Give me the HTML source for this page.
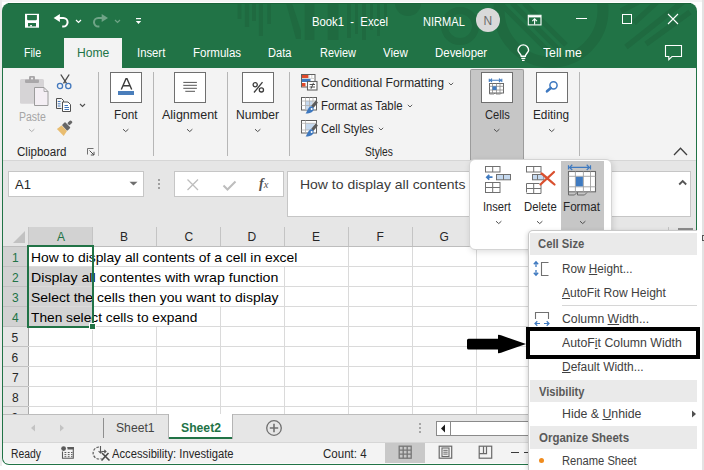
<!DOCTYPE html>
<html><head><meta charset="utf-8"><style>
html,body{margin:0;padding:0}
html{width:704px;height:470px;overflow:hidden}
body{width:704px;height:470px;position:relative;overflow:hidden;background:#fff;font-family:"Liberation Sans",sans-serif}
.t{position:absolute;white-space:nowrap;transform-origin:0 0;font-family:"Liberation Sans",sans-serif}
.a{position:absolute}
svg{position:absolute;overflow:visible}

</style></head><body>
<!-- outer -->
<div class="a" style="left:0;top:0;width:704px;height:2px;background:#f4f4f4"></div>
<div class="a" style="left:0;top:0;width:2px;height:466px;background:#ececec"></div>
<div class="a" style="left:702px;top:0;width:2px;height:470px;background:#e3e3e3"></div>
<!-- window frame -->
<div class="a" style="left:2px;top:3px;width:695px;height:462px;background:#217346;border-radius:8px 8px 7px 7px;overflow:hidden">
 <svg width="695" height="66" style="left:0;top:0">
  <g fill="#1f6a40">
   <rect x="235.6" y="0" width="3.8" height="16.0"/>
   <rect x="242.8" y="0" width="4.4" height="24.0"/>
   <rect x="250.0" y="0" width="4.0" height="18.0"/>
   <rect x="256.8" y="0" width="4.2" height="33.0"/>
   <rect x="265.3" y="0" width="3.7" height="21.0"/>
   <rect x="302.7" y="0" width="9.7" height="37.0"/>
   <rect x="325.7" y="0" width="10.8" height="37.0"/>
   <rect x="345.0" y="0" width="4.0" height="35.0"/>
   <rect x="353.0" y="0" width="3.0" height="31.0"/>
   <rect x="360.0" y="0" width="4.0" height="37.0"/>
   <rect x="368.0" y="0" width="3.0" height="27.0"/>
   <rect x="375.0" y="0" width="3.0" height="33.0"/>
   <rect x="382.0" y="0" width="3.0" height="17.0"/>
   <path d="M284 0 L290 0 L299 28 L299 36 L294 36 Z"/>
   <circle cx="406" cy="0" r="13"/>
  </g>
  <g fill="none" stroke="#1f6a40">
   <circle cx="458" cy="23" r="15.5" stroke-width="7"/>
   <circle cx="549" cy="7" r="52" stroke-width="11"/>
   <path d="M498 0 L548 50 M510 0 L556 46 M522 0 L564 42" stroke-width="5"/>
   <path d="M688 9 L644 41 M682 -2 L624 44 M656 -2 L632 20 M638 -2 L619 8" stroke-width="5.5"/>
  </g>
 </svg>
</div>
<!-- top dark edge -->
<div class="a" style="left:8px;top:3px;width:683px;height:1px;background:#1a6338"></div>

<!-- QAT icons -->
<svg width="16" height="16" style="left:24px;top:13px">
 <rect x="1" y="0.8" width="14" height="13.9" fill="#fff"/>
 <path d="M3.1 2.1 L12.9 2.1 L12.9 6.4 L12.1 7.2 L3.9 7.2 L3.1 6.4 Z" fill="#217346"/>
 <rect x="4" y="10" width="8" height="3.4" fill="#217346"/>
 <rect x="6.1" y="12.1" width="1.9" height="1.3" fill="#fff"/>
</svg>
<svg width="18" height="16" style="left:53px;top:13px">
 <path d="M0.6 5 L6.9 1 L6.9 9 Z" fill="#fff"/>
 <path d="M5 5 L10.3 5 A4.3 4.3 0 0 1 10.3 13.6 L9.2 13.6" fill="none" stroke="#fff" stroke-width="2"/>
</svg>
<svg width="8" height="5" style="left:75px;top:18.5px"><path d="M1 1 L3.5 3.5 L6 1" fill="none" stroke="#fff" stroke-width="1.2"/></svg>
<svg width="18" height="16" style="left:92.5px;top:13px" opacity="0.35">
 <g transform="translate(15.6,0) scale(-1,1)">
 <path d="M0.6 5 L6.9 1 L6.9 9 Z" fill="#fff"/>
 <path d="M5 5 L10.3 5 A4.3 4.3 0 0 1 10.3 13.6 L9.2 13.6" fill="none" stroke="#fff" stroke-width="2"/>
 </g>
</svg>
<svg width="8" height="5" style="left:114px;top:18.5px" opacity="0.35"><path d="M1 1 L3.5 3.5 L6 1" fill="none" stroke="#fff" stroke-width="1.2"/></svg>
<svg width="8" height="8" style="left:135px;top:17px">
 <rect x="1" y="1" width="5" height="1.2" fill="#fff"/>
 <path d="M0.8 4 L6.2 4 L3.5 7 Z" fill="#fff"/>
</svg>

<!-- avatar -->
<div class="a" style="left:476px;top:8px;width:24px;height:24px;border-radius:50%;background:#d9d9d9"></div>
<!-- window controls -->
<svg width="16" height="12" style="left:527px;top:13.5px">
 <rect x="1.3" y="1.3" width="12.7" height="9.6" fill="none" stroke="#fff" stroke-width="1.1"/>
 <path d="M1.3 2.6 L14 2.6" stroke="#fff" stroke-width="1.6"/>
 <path d="M7.6 10.5 L7.6 5 M5.3 7.2 L7.6 4.9 L9.9 7.2" fill="none" stroke="#fff" stroke-width="1.1"/>
</svg>
<div class="a" style="left:575.5px;top:18px;width:11px;height:1px;background:#fff"></div>
<div class="a" style="left:622px;top:14px;width:10px;height:10px;border:1px solid #fff;box-sizing:border-box"></div>
<svg width="12" height="12" style="left:667px;top:13px"><path d="M1 1 L11 11 M11 1 L1 11" stroke="#fff" stroke-width="1.1"/></svg>
<!-- tell me bulb -->
<svg width="14" height="18" style="left:517px;top:44.5px">
 <path d="M4.3 11.3 C4.3 9 1 7.5 1 5.2 A5.3 5.3 0 0 1 11.6 5.2 C11.6 7.5 8.3 9 8.3 11.3 Z" fill="none" stroke="#fff" stroke-width="1.4"/>
 <path d="M4.3 13.3 L8.3 13.3 M5 15.3 L7.6 15.3" stroke="#fff" stroke-width="1.3"/>
</svg>
<!-- comment icon -->
<svg width="20" height="18" style="left:663.5px;top:43.5px">
 <path d="M1.5 1.5 L17.5 1.5 L17.5 12.5 L8 12.5 L4.8 15.6 L4.8 12.5 L1.5 12.5 Z" fill="none" stroke="#fff" stroke-width="1.1"/>
</svg>
<!-- home tab -->
<div class="a" style="left:64px;top:38px;width:58px;height:30px;background:#f3f3f3"></div>
<!-- ribbon -->
<div class="a" style="left:3px;top:68px;width:693px;height:92px;background:#f3f3f3"></div>
<div class="a" style="left:3px;top:160px;width:693px;height:1px;background:#d6d6d6"></div>
<div class="a" style="left:3px;top:161px;width:693px;height:66px;background:#e6e6e6"></div>
<!-- grid area -->
<div class="a" style="left:3px;top:227px;width:693px;height:187px;background:#fff"></div>
<!-- tab bar -->
<div class="a" style="left:3px;top:414px;width:693px;height:28px;background:#e6e6e6;border-top:1px solid #c8c8c8;box-sizing:border-box"></div>
<!-- status bar -->

<!-- ===== RIBBON ===== -->
<!-- Paste -->
<svg width="30" height="32" style="left:19px;top:75px">
 <rect x="1" y="4" width="24" height="24.7" rx="1.5" fill="#d6d4d6"/>
 <rect x="6" y="4.4" width="14" height="3.5" rx="0.8" fill="#a9a7a9"/>
 <rect x="10" y="1" width="6" height="5" rx="1.2" fill="#a9a7a9"/>
 <circle cx="13" cy="3.5" r="1" fill="#f3f3f3"/>
 <path d="M15.5 12.5 L25 12.5 L29 16.5 L29 30.5 L15.5 30.5 Z" fill="#f4eff4" stroke="#9c9c9c" stroke-width="1"/>
 <path d="M25 12.5 L25 16.5 L29 16.5" fill="none" stroke="#9c9c9c" stroke-width="0.8"/>
</svg>
<svg width="8" height="5" style="left:28.0px;top:128.0px"><path d="M1 1.2 L3.7 3.6 L6.4 1.2" fill="none" stroke="#b0b0b0" stroke-width="1"/></svg>
<!-- cut -->
<svg width="18" height="16" style="left:56px;top:73px">
 <path d="M4.8 1.5 L10.5 10.3 M13.2 1.5 L7.5 10.3" stroke="#4a4a4a" stroke-width="1.35"/>
 <circle cx="4" cy="13" r="2.6" fill="none" stroke="#4378bd" stroke-width="1.3"/>
 <circle cx="12.3" cy="13" r="2.6" fill="none" stroke="#4378bd" stroke-width="1.3"/>
</svg>
<!-- copy -->
<svg width="18" height="16" style="left:55px;top:97px">
 <path d="M1.5 1.5 L6.5 1.5 L8.5 3.5 L8.5 5 M1.5 1.5 L1.5 11.5 L6.5 11.5" fill="none" stroke="#505050" stroke-width="1"/>
 <path d="M2.8 4.5 L5.5 4.5 M2.8 6.8 L5.5 6.8 M2.8 9 L5.5 9" stroke="#4378bd" stroke-width="1"/>
 <path d="M7.5 5 L13 5 L15.5 7.5 L15.5 14.5 L7.5 14.5 Z" fill="#fff" stroke="#505050" stroke-width="1"/>
 <path d="M9.5 8.5 L13 8.5 M9.5 10.5 L14 10.5 M9.5 12.5 L14 12.5" stroke="#4378bd" stroke-width="1"/>
</svg>
<svg width="8" height="5" style="left:79px;top:103px"><path d="M1 1 L3.5 3.5 L6 1" fill="none" stroke="#505050" stroke-width="1.1"/></svg>
<!-- format painter -->
<svg width="22" height="22" style="left:52px;top:116px">
 <g transform="translate(14,10.6) rotate(-44)">
  <path d="M-2.4 -3.9 L-2.4 3.9 L-8.2 5.2 L-8.2 -4.6 Z" fill="#e9bd70"/>
  <rect x="-2" y="-3.9" width="4.6" height="7.8" rx="0.9" fill="#676767"/>
  <rect x="3.2" y="-1.6" width="4.6" height="3.2" rx="1" fill="#676767"/>
 </g>
</svg>
<!-- dialog launcher -->
<svg width="10" height="10" style="left:86px;top:147px">
 <path d="M1.5 7.5 L1.5 1.5 L7.5 1.5" fill="none" stroke="#707070" stroke-width="1"/>
 <path d="M3.5 3.5 L8 8 M8 4.8 L8 8 L4.8 8" fill="none" stroke="#505050" stroke-width="1"/>
</svg>
<!-- separators -->
<div class="a" style="left:98px;top:72px;width:1px;height:84px;background:#b6b6b6"></div>
<div class="a" style="left:153px;top:72px;width:1px;height:84px;background:#b6b6b6"></div>
<div class="a" style="left:227px;top:72px;width:1px;height:84px;background:#b6b6b6"></div>
<div class="a" style="left:289px;top:72px;width:1px;height:84px;background:#b6b6b6"></div>
<div class="a" style="left:579px;top:72px;width:1px;height:84px;background:#b6b6b6"></div>
<!-- Font -->
<div class="a" style="left:110px;top:72px;width:32px;height:31px;background:#fff;border:1px solid #6f6f6f;box-sizing:border-box"></div>
<svg width="14" height="12" style="left:120px;top:78px"><path d="M1.3 11.5 L6 0.8 L7 0.8 L11.7 11.5 M3.2 7.8 L9.8 7.8" fill="none" stroke="#3c3c3c" stroke-width="1.4"/></svg>
<div class="a" style="left:118px;top:91px;width:16px;height:4px;background:#4a7ebb"></div>
<svg width="8" height="5" style="left:122.0px;top:127.5px"><path d="M1 1.2 L3.7 3.6 L6.4 1.2" fill="none" stroke="#505050" stroke-width="1"/></svg>
<!-- Alignment -->
<div class="a" style="left:174px;top:72px;width:32px;height:31px;background:#fff;border:1px solid #6f6f6f;box-sizing:border-box"></div>
<svg width="16" height="12" style="left:182px;top:80px"><path d="M1.3 2.4 L14.9 2.4 M1.3 5.3 L14.9 5.3 M1.3 8.3 L14.9 8.3 M3.3 11.3 L13 11.3" stroke="#555" stroke-width="1"/></svg>
<svg width="8" height="5" style="left:186.0px;top:127.5px"><path d="M1 1.2 L3.7 3.6 L6.4 1.2" fill="none" stroke="#505050" stroke-width="1"/></svg>
<!-- Number -->
<div class="a" style="left:242px;top:72px;width:32px;height:31px;background:#fff;border:1px solid #6f6f6f;box-sizing:border-box"></div>
<svg width="14" height="13" style="left:252px;top:81px">
 <circle cx="3.2" cy="3.7" r="2.1" fill="none" stroke="#3c3c3c" stroke-width="1.3"/>
 <circle cx="9.4" cy="8.9" r="2.1" fill="none" stroke="#3c3c3c" stroke-width="1.3"/>
 <path d="M10.5 1.2 L2 11.5" stroke="#3c3c3c" stroke-width="1.3"/>
</svg>
<svg width="8" height="5" style="left:254.0px;top:127.5px"><path d="M1 1.2 L3.7 3.6 L6.4 1.2" fill="none" stroke="#505050" stroke-width="1"/></svg>
<!-- Styles icons -->
<svg width="20" height="18" style="left:300px;top:73px">
 <rect x="1.5" y="1.5" width="13.5" height="12.5" fill="#fff" stroke="#606060" stroke-width="1"/>
 <rect x="2" y="2" width="6.5" height="3" fill="#e04a2a"/>
 <path d="M9 2 L9 5 M11.8 2 L11.8 5 M2 5.5 L14.5 5.5" stroke="#c8c8c8" stroke-width="0.8"/>
 <rect x="2" y="6" width="8.5" height="3" fill="#3f7ac0"/>
 <rect x="2" y="10" width="3.5" height="3.5" fill="#e04a2a"/>
 <rect x="7.5" y="8.5" width="9.5" height="8.5" fill="#fff" stroke="#606060" stroke-width="1.1"/>
 <path d="M9.6 11.5 L15 11.5 M9.6 14 L15 14 M13.5 9.8 L11 15.8" stroke="#404040" stroke-width="0.9"/>
</svg>
<svg width="20" height="18" style="left:300px;top:96px">
 <rect x="1.5" y="1.5" width="15" height="12.5" fill="#fff" stroke="#606060" stroke-width="1"/>
 <rect x="5.5" y="5" width="7" height="8.5" fill="#c5d9ef"/>
 <path d="M5.5 1.5 L5.5 14 M9.5 1.5 L9.5 14 M13 1.5 L13 10 M1.5 5 L16.5 5 M1.5 9.5 L14 9.5" stroke="#b0b0b0" stroke-width="0.8"/>
 <path d="M16.8 5.5 L12.3 11" stroke="#5c5c5c" stroke-width="3"/>
 <path d="M11 10.2 C13.5 10.5 14.5 13 13 15 C11.5 16.8 8.5 17.5 5.5 17.6 C7 16 8 11 11 10.2 Z" fill="#3e78be"/>
 <circle cx="11.6" cy="13" r="1" fill="#fff"/>
</svg>
<svg width="20" height="18" style="left:300px;top:119px">
 <rect x="1.5" y="1.5" width="15" height="12.5" fill="#fff" stroke="#606060" stroke-width="1"/>
 <rect x="5.5" y="4.5" width="9" height="6.5" fill="#c5d9ef"/>
 <path d="M5.5 1.5 L5.5 14 M1.5 4.3 L16.5 4.3 M1.5 11 L11 11" stroke="#b0b0b0" stroke-width="0.8"/>
 <path d="M16.8 5.5 L12.3 11" stroke="#5c5c5c" stroke-width="3"/>
 <path d="M11 10.2 C13.5 10.5 14.5 13 13 15 C11.5 16.8 8.5 17.5 5.5 17.6 C7 16 8 11 11 10.2 Z" fill="#3e78be"/>
 <circle cx="11.6" cy="13" r="1" fill="#fff"/>
</svg>
<svg width="6" height="4" style="left:448px;top:81.5px"><path d="M0.8 0.8 L3 3 L5.2 0.8" fill="none" stroke="#606060" stroke-width="1"/></svg>
<svg width="6" height="4" style="left:406.5px;top:103.5px"><path d="M0.8 0.8 L3 3 L5.2 0.8" fill="none" stroke="#606060" stroke-width="1"/></svg>
<svg width="6" height="4" style="left:377.5px;top:126.5px"><path d="M0.8 0.8 L3 3 L5.2 0.8" fill="none" stroke="#606060" stroke-width="1"/></svg>
<!-- Cells (pressed) -->
<div class="a" style="left:470px;top:69px;width:54px;height:91px;background:#c6c6c6;border:1px solid #9c9c9c;border-bottom:none;border-radius:2px 2px 0 0;box-sizing:border-box"></div>
<div class="a" style="left:481px;top:72px;width:32px;height:31px;background:#fff;border:1px solid #6f6f6f;box-sizing:border-box"></div>
<svg width="18" height="18" style="left:488px;top:77px">
 <path d="M1.3 1.8 L1.3 5 M13.8 1.8 L13.8 5 M2 3.3 L13 3.3 M4 1.6 L2.3 3.3 L4 5 M11 1.6 L12.8 3.3 L11 5" fill="none" stroke="#3f7ac0" stroke-width="1.1"/>
 <rect x="1.5" y="6.5" width="14" height="9.5" fill="#fff" stroke="#6a6a6a" stroke-width="1"/>
 <path d="M4.5 6.5 L4.5 16 M8.5 6.5 L8.5 16 M12 6.5 L12 16 M1.5 9.3 L15.5 9.3 M1.5 13 L15.5 13" stroke="#8a8a8a" stroke-width="0.8"/>
 <rect x="4.5" y="9.3" width="4" height="3.7" fill="#3f7ac0"/>
 <path d="M1.5 16 L1.5 17 L6 17 L7 16 M8 16 L8 17 L12.5 17 L13.5 16" fill="none" stroke="#6a6a6a" stroke-width="0.8"/>
</svg>
<svg width="8" height="5" style="left:493.0px;top:127.5px"><path d="M1 1.2 L3.7 3.6 L6.4 1.2" fill="none" stroke="#505050" stroke-width="1"/></svg>
<!-- Editing -->
<div class="a" style="left:536px;top:72px;width:32px;height:31px;background:#fff;border:1px solid #6f6f6f;box-sizing:border-box"></div>
<svg width="14" height="14" style="left:545px;top:79px">
 <circle cx="8.5" cy="6.3" r="3.6" fill="none" stroke="#3d78c0" stroke-width="1.5"/>
 <path d="M5.8 9 L2 12.3" stroke="#3d78c0" stroke-width="2.6" stroke-linecap="round"/>
</svg>
<svg width="8" height="5" style="left:548.0px;top:127.5px"><path d="M1 1.2 L3.7 3.6 L6.4 1.2" fill="none" stroke="#505050" stroke-width="1"/></svg>
<!-- collapse caret -->
<svg width="16" height="10" style="left:673px;top:147px"><path d="M1 8 L7.5 1.3 L14 8" fill="none" stroke="#404040" stroke-width="1.3"/></svg>
<!-- ===== FORMULA BAR ===== -->
<div class="a" style="left:8px;top:171px;width:136px;height:26px;background:#fff;border:1px solid #c6c6c6;box-sizing:border-box"></div>
<svg width="10" height="6" style="left:129px;top:180.5px"><path d="M0.5 0.8 L8.5 0.8 L4.5 4.5 Z" fill="#6e6e6e"/></svg>
<div class="a" style="left:158px;top:179px;width:2px;height:2px;background:#a0a0a0"></div>
<div class="a" style="left:158px;top:183px;width:2px;height:2px;background:#a0a0a0"></div>
<div class="a" style="left:158px;top:187px;width:2px;height:2px;background:#a0a0a0"></div>
<div class="a" style="left:174px;top:171px;width:110px;height:26px;background:#fff;border:1px solid #c6c6c6;box-sizing:border-box"></div>
<svg width="14" height="14" style="left:186px;top:178px"><path d="M1.5 1.5 L12 12 M12 1.5 L1.5 12" stroke="#bdbdbd" stroke-width="1.3"/></svg>
<svg width="16" height="12" style="left:222px;top:180px"><path d="M1.5 5.5 L5.5 9.5 L13.5 1.5" fill="none" stroke="#bdbdbd" stroke-width="2"/></svg>
<span class="a" style="left:259px;top:175.5px;font-family:'Liberation Serif',serif;font-style:italic;font-weight:bold;font-size:14px;line-height:16px;color:#505050;z-index:1">f<span style="font-size:10.5px;font-weight:normal">x</span></span>
<div class="a" style="left:287px;top:171px;width:404px;height:46px;background:#fff;border:1px solid #c6c6c6;box-sizing:border-box"></div>
<span class="a" style="left:468.5px;top:177.9px;font-size:13.5px;line-height:13.5px;color:#3a3a3a;white-space:nowrap;z-index:1;transform:scaleX(1.03);transform-origin:0 0">of a cell</span>
<svg width="10" height="7" style="left:678px;top:179px"><path d="M1.2 5.5 L4.7 2 L8.2 5.5" fill="none" stroke="#555" stroke-width="1.8"/></svg>

<!-- ===== GRID ===== -->
<div class="a" style="left:3px;top:227px;width:693px;height:19px;background:#e6e6e6"></div>
<div class="a" style="left:3px;top:246px;width:25px;height:168px;background:#e6e6e6"></div>
<svg width="14" height="14" style="left:12px;top:230px"><path d="M13 1 L13 13 L1 13 Z" fill="#c2c2c2"/></svg>
<div class="a" style="left:28px;top:227px;width:64px;height:19px;background:#d2d2d2"></div>
<div class="a" style="left:3px;top:247px;width:25px;height:79px;background:#d2d2d2"></div>
<div class="a" style="left:28px;top:227px;width:1px;height:19px;background:#c4c4c4"></div>
<div class="a" style="left:92px;top:227px;width:1px;height:19px;background:#c4c4c4"></div>
<div class="a" style="left:156px;top:227px;width:1px;height:19px;background:#c4c4c4"></div>
<div class="a" style="left:220px;top:227px;width:1px;height:19px;background:#c4c4c4"></div>
<div class="a" style="left:284px;top:227px;width:1px;height:19px;background:#c4c4c4"></div>
<div class="a" style="left:348px;top:227px;width:1px;height:19px;background:#c4c4c4"></div>
<div class="a" style="left:412px;top:227px;width:1px;height:19px;background:#c4c4c4"></div>
<div class="a" style="left:476px;top:227px;width:1px;height:19px;background:#c4c4c4"></div>
<div class="a" style="left:540px;top:227px;width:1px;height:19px;background:#c4c4c4"></div>
<div class="a" style="left:604px;top:227px;width:1px;height:19px;background:#c4c4c4"></div>
<div class="a" style="left:668px;top:227px;width:1px;height:19px;background:#c4c4c4"></div>
<div class="a" style="left:3px;top:246px;width:693px;height:1px;background:#bdbdbd"></div>
<div class="a" style="left:28px;top:246px;width:1px;height:168px;background:#a8a8a8"></div>
<div class="a" style="left:3px;top:266px;width:25px;height:1px;background:#c2c2c2"></div>
<div class="a" style="left:3px;top:286px;width:25px;height:1px;background:#c2c2c2"></div>
<div class="a" style="left:3px;top:306px;width:25px;height:1px;background:#c2c2c2"></div>
<div class="a" style="left:3px;top:326px;width:25px;height:1px;background:#c2c2c2"></div>
<div class="a" style="left:3px;top:346px;width:25px;height:1px;background:#c2c2c2"></div>
<div class="a" style="left:3px;top:366px;width:25px;height:1px;background:#c2c2c2"></div>
<div class="a" style="left:3px;top:386px;width:25px;height:1px;background:#c2c2c2"></div>
<div class="a" style="left:3px;top:406px;width:25px;height:1px;background:#c2c2c2"></div>
<div class="a" style="left:28px;top:267px;width:64px;height:59px;background:#d3d3d3"></div>
<div class="a" style="left:28px;top:266px;width:668px;height:1px;background:#dadada"></div>
<div class="a" style="left:28px;top:286px;width:668px;height:1px;background:#dadada"></div>
<div class="a" style="left:28px;top:306px;width:668px;height:1px;background:#dadada"></div>
<div class="a" style="left:28px;top:326px;width:668px;height:1px;background:#dadada"></div>
<div class="a" style="left:28px;top:346px;width:668px;height:1px;background:#dadada"></div>
<div class="a" style="left:28px;top:366px;width:668px;height:1px;background:#dadada"></div>
<div class="a" style="left:28px;top:386px;width:668px;height:1px;background:#dadada"></div>
<div class="a" style="left:28px;top:406px;width:668px;height:1px;background:#dadada"></div>
<div class="a" style="left:92px;top:247px;width:1px;height:20px;background:#dadada"></div>
<div class="a" style="left:92px;top:267px;width:1px;height:20px;background:#dadada"></div>
<div class="a" style="left:92px;top:287px;width:1px;height:20px;background:#dadada"></div>
<div class="a" style="left:92px;top:307px;width:1px;height:20px;background:#dadada"></div>
<div class="a" style="left:92px;top:327px;width:1px;height:20px;background:#dadada"></div>
<div class="a" style="left:92px;top:347px;width:1px;height:20px;background:#dadada"></div>
<div class="a" style="left:92px;top:367px;width:1px;height:20px;background:#dadada"></div>
<div class="a" style="left:92px;top:387px;width:1px;height:20px;background:#dadada"></div>
<div class="a" style="left:92px;top:407px;width:1px;height:7px;background:#dadada"></div>
<div class="a" style="left:156px;top:327px;width:1px;height:20px;background:#dadada"></div>
<div class="a" style="left:156px;top:347px;width:1px;height:20px;background:#dadada"></div>
<div class="a" style="left:156px;top:367px;width:1px;height:20px;background:#dadada"></div>
<div class="a" style="left:156px;top:387px;width:1px;height:20px;background:#dadada"></div>
<div class="a" style="left:156px;top:407px;width:1px;height:7px;background:#dadada"></div>
<div class="a" style="left:220px;top:307px;width:1px;height:20px;background:#dadada"></div>
<div class="a" style="left:220px;top:327px;width:1px;height:20px;background:#dadada"></div>
<div class="a" style="left:220px;top:347px;width:1px;height:20px;background:#dadada"></div>
<div class="a" style="left:220px;top:367px;width:1px;height:20px;background:#dadada"></div>
<div class="a" style="left:220px;top:387px;width:1px;height:20px;background:#dadada"></div>
<div class="a" style="left:220px;top:407px;width:1px;height:7px;background:#dadada"></div>
<div class="a" style="left:284px;top:267px;width:1px;height:20px;background:#dadada"></div>
<div class="a" style="left:284px;top:287px;width:1px;height:20px;background:#dadada"></div>
<div class="a" style="left:284px;top:307px;width:1px;height:20px;background:#dadada"></div>
<div class="a" style="left:284px;top:327px;width:1px;height:20px;background:#dadada"></div>
<div class="a" style="left:284px;top:347px;width:1px;height:20px;background:#dadada"></div>
<div class="a" style="left:284px;top:367px;width:1px;height:20px;background:#dadada"></div>
<div class="a" style="left:284px;top:387px;width:1px;height:20px;background:#dadada"></div>
<div class="a" style="left:284px;top:407px;width:1px;height:7px;background:#dadada"></div>
<div class="a" style="left:348px;top:247px;width:1px;height:20px;background:#dadada"></div>
<div class="a" style="left:348px;top:267px;width:1px;height:20px;background:#dadada"></div>
<div class="a" style="left:348px;top:287px;width:1px;height:20px;background:#dadada"></div>
<div class="a" style="left:348px;top:307px;width:1px;height:20px;background:#dadada"></div>
<div class="a" style="left:348px;top:327px;width:1px;height:20px;background:#dadada"></div>
<div class="a" style="left:348px;top:347px;width:1px;height:20px;background:#dadada"></div>
<div class="a" style="left:348px;top:367px;width:1px;height:20px;background:#dadada"></div>
<div class="a" style="left:348px;top:387px;width:1px;height:20px;background:#dadada"></div>
<div class="a" style="left:348px;top:407px;width:1px;height:7px;background:#dadada"></div>
<div class="a" style="left:412px;top:247px;width:1px;height:20px;background:#dadada"></div>
<div class="a" style="left:412px;top:267px;width:1px;height:20px;background:#dadada"></div>
<div class="a" style="left:412px;top:287px;width:1px;height:20px;background:#dadada"></div>
<div class="a" style="left:412px;top:307px;width:1px;height:20px;background:#dadada"></div>
<div class="a" style="left:412px;top:327px;width:1px;height:20px;background:#dadada"></div>
<div class="a" style="left:412px;top:347px;width:1px;height:20px;background:#dadada"></div>
<div class="a" style="left:412px;top:367px;width:1px;height:20px;background:#dadada"></div>
<div class="a" style="left:412px;top:387px;width:1px;height:20px;background:#dadada"></div>
<div class="a" style="left:412px;top:407px;width:1px;height:7px;background:#dadada"></div>
<div class="a" style="left:476px;top:247px;width:1px;height:20px;background:#dadada"></div>
<div class="a" style="left:476px;top:267px;width:1px;height:20px;background:#dadada"></div>
<div class="a" style="left:476px;top:287px;width:1px;height:20px;background:#dadada"></div>
<div class="a" style="left:476px;top:307px;width:1px;height:20px;background:#dadada"></div>
<div class="a" style="left:476px;top:327px;width:1px;height:20px;background:#dadada"></div>
<div class="a" style="left:476px;top:347px;width:1px;height:20px;background:#dadada"></div>
<div class="a" style="left:476px;top:367px;width:1px;height:20px;background:#dadada"></div>
<div class="a" style="left:476px;top:387px;width:1px;height:20px;background:#dadada"></div>
<div class="a" style="left:476px;top:407px;width:1px;height:7px;background:#dadada"></div>
<div class="a" style="left:540px;top:247px;width:1px;height:20px;background:#dadada"></div>
<div class="a" style="left:540px;top:267px;width:1px;height:20px;background:#dadada"></div>
<div class="a" style="left:540px;top:287px;width:1px;height:20px;background:#dadada"></div>
<div class="a" style="left:540px;top:307px;width:1px;height:20px;background:#dadada"></div>
<div class="a" style="left:540px;top:327px;width:1px;height:20px;background:#dadada"></div>
<div class="a" style="left:540px;top:347px;width:1px;height:20px;background:#dadada"></div>
<div class="a" style="left:540px;top:367px;width:1px;height:20px;background:#dadada"></div>
<div class="a" style="left:540px;top:387px;width:1px;height:20px;background:#dadada"></div>
<div class="a" style="left:540px;top:407px;width:1px;height:7px;background:#dadada"></div>
<div class="a" style="left:604px;top:247px;width:1px;height:20px;background:#dadada"></div>
<div class="a" style="left:604px;top:267px;width:1px;height:20px;background:#dadada"></div>
<div class="a" style="left:604px;top:287px;width:1px;height:20px;background:#dadada"></div>
<div class="a" style="left:604px;top:307px;width:1px;height:20px;background:#dadada"></div>
<div class="a" style="left:604px;top:327px;width:1px;height:20px;background:#dadada"></div>
<div class="a" style="left:604px;top:347px;width:1px;height:20px;background:#dadada"></div>
<div class="a" style="left:604px;top:367px;width:1px;height:20px;background:#dadada"></div>
<div class="a" style="left:604px;top:387px;width:1px;height:20px;background:#dadada"></div>
<div class="a" style="left:604px;top:407px;width:1px;height:7px;background:#dadada"></div>
<div class="a" style="left:668px;top:247px;width:1px;height:20px;background:#dadada"></div>
<div class="a" style="left:668px;top:267px;width:1px;height:20px;background:#dadada"></div>
<div class="a" style="left:668px;top:287px;width:1px;height:20px;background:#dadada"></div>
<div class="a" style="left:668px;top:307px;width:1px;height:20px;background:#dadada"></div>
<div class="a" style="left:668px;top:327px;width:1px;height:20px;background:#dadada"></div>
<div class="a" style="left:668px;top:347px;width:1px;height:20px;background:#dadada"></div>
<div class="a" style="left:668px;top:367px;width:1px;height:20px;background:#dadada"></div>
<div class="a" style="left:668px;top:387px;width:1px;height:20px;background:#dadada"></div>
<div class="a" style="left:668px;top:407px;width:1px;height:7px;background:#dadada"></div>
<div class="a" style="left:27px;top:245px;width:67px;height:83px;border:2px solid #217346;box-sizing:border-box;z-index:2"></div>
<div class="a" style="left:89px;top:323px;width:5px;height:5px;background:#217346;border:1px solid #fff;z-index:2"></div>
<div class="a" style="left:678px;top:228px;width:15px;height:2px;background:#8c8c8c;z-index:1"></div><div class="a" style="left:0;top:0;z-index:3">
<!-- ===== SHEET TABS ===== -->
<div class="a" style="left:3px;top:414px;width:693px;height:28px;background:#e6e6e6"></div>
<div class="a" style="left:3px;top:414px;width:693px;height:1px;background:#bcbcbc"></div>
<svg width="6" height="9" style="left:29.5px;top:423.5px"><path d="M5 0.5 L5 7.5 L1 4 Z" fill="#c3c3c3"/></svg>
<svg width="6" height="9" style="left:58.5px;top:423.5px"><path d="M1 0.5 L1 7.5 L5 4 Z" fill="#c3c3c3"/></svg>
<div class="a" style="left:103px;top:418px;width:1px;height:20px;background:#8f8f8f"></div>
<!-- Sheet2 active tab -->
<div class="a" style="left:168px;top:414px;width:65px;height:25px;background:#fff;border-left:1px solid #b4b4b4;border-right:1px solid #b4b4b4;box-sizing:border-box"></div>
<div class="a" style="left:169px;top:437px;width:63px;height:2px;background:#217346"></div>
<!-- plus -->
<svg width="18" height="18" style="left:265px;top:419px">
 <circle cx="9" cy="9" r="7.3" fill="none" stroke="#707070" stroke-width="1.3"/>
 <path d="M9 4.8 L9 13.2 M4.8 9 L13.2 9" stroke="#707070" stroke-width="1.6"/>
</svg>
<!-- dots -->
<div class="a" style="left:419px;top:423px;width:2px;height:2px;background:#a6a6a6"></div>
<div class="a" style="left:419px;top:427px;width:2px;height:2px;background:#a6a6a6"></div>
<div class="a" style="left:419px;top:431px;width:2px;height:2px;background:#a6a6a6"></div>
<!-- h scrollbar -->
<div class="a" style="left:436px;top:421px;width:260px;height:15px;background:#fff;border:1px solid #8a8a8a;box-sizing:border-box"></div>
<div class="a" style="left:450px;top:421px;width:1px;height:15px;background:#8a8a8a"></div>
<svg width="6" height="9" style="left:440px;top:424px"><path d="M5 0.5 L5 8.5 L1 4.5 Z" fill="#1a1a1a"/></svg>
<!-- ===== STATUS BAR ===== -->
<div class="a" style="left:3px;top:442px;width:693px;height:22px;background:#fafafa;border-radius:0 0 6px 6px"></div>
<div class="a" style="left:3px;top:442px;width:693px;height:21px;background:#f3f3f3;border-radius:0 0 6px 6px"></div>
<div class="a" style="left:3px;top:442px;width:693px;height:1px;background:#d6d6d6"></div>
<svg width="14" height="14" style="left:61px;top:446px">
 <circle cx="2.6" cy="2.6" r="2.4" fill="#5a5a5a"/>
 <path d="M1.5 5.5 L1.5 12.3 L12.3 12.3 L12.3 1.5 L6.5 1.5" fill="none" stroke="#5a5a5a" stroke-width="1.1"/>
 <rect x="6.5" y="1" width="6.3" height="2.5" fill="#5a5a5a"/>
 <path d="M3.5 6.5 L5.3 6.5 M6.8 6.5 L8.6 6.5 M10 6.5 L11.5 6.5 M3.5 8.6 L5.3 8.6 M6.8 8.6 L8.6 8.6 M10 8.6 L11.5 8.6 M3.5 10.7 L5.3 10.7 M6.8 10.7 L8.6 10.7 M10 10.7 L11.5 10.7" stroke="#5a5a5a" stroke-width="1"/>
</svg>
<svg width="18" height="17" style="left:92.5px;top:445px">
 <path d="M6 2 A6 6 0 1 0 8.5 13.5" fill="none" stroke="#5a5a5a" stroke-width="1.2" stroke-dasharray="2.6 1.4"/>
 <path d="M7.5 1 L7.5 8 M5.6 6.2 L7.5 8 L9.4 6.2 M9 6.5 L13 6.5 M11.3 4.8 L13 6.5 L11.3 8.2" fill="none" stroke="#5a5a5a" stroke-width="1.1"/>
 <path d="M9 8 L16.5 15.5 M15.5 8 L8.5 15.5" stroke="#4a4a4a" stroke-width="1.6"/>
</svg>
<!-- view buttons -->
<div class="a" style="left:385px;top:443px;width:40px;height:20px;background:#c8c8c8"></div>
<svg width="15" height="15" style="left:397.5px;top:445px">
 <rect x="1.2" y="1.2" width="12" height="12" fill="none" stroke="#767676" stroke-width="1.3"/>
 <path d="M5.2 1.2 L5.2 13.2 M9.2 1.2 L9.2 13.2 M1.2 5.2 L13.2 5.2 M1.2 9.2 L13.2 9.2" stroke="#767676" stroke-width="1.3"/>
</svg>
<svg width="16" height="15" style="left:437.5px;top:445px">
 <rect x="1.2" y="1.2" width="12.5" height="12" fill="none" stroke="#6a6a6a" stroke-width="1.2"/>
 <rect x="4" y="3" width="7" height="8.5" fill="none" stroke="#6a6a6a" stroke-width="1.1"/>
 <path d="M5.3 5.3 L9.7 5.3 M5.3 7.2 L9.7 7.2 M5.3 9.1 L9.7 9.1" stroke="#6a6a6a" stroke-width="1"/>
</svg>
<svg width="16" height="15" style="left:477.5px;top:445px">
 <rect x="1.2" y="1.2" width="12.5" height="12" fill="none" stroke="#6a6a6a" stroke-width="1.2"/>
 <path d="M1.2 8.7 L8.5 8.7 L8.5 1.2 M5.5 1.2 L5.5 8.7" fill="none" stroke="#6a6a6a" stroke-width="1.2"/>
</svg>
<div class="a" style="left:511px;top:452px;width:8px;height:1px;background:#3a3a3a"></div>
<div class="a" style="left:524px;top:452px;width:6px;height:1px;background:#3a3a3a"></div>

</div>
<!-- ===== POPUP ===== -->
<div class="a" style="left:469px;top:159px;width:143px;height:91px;background:#fff;border:1px solid #d4d4d4;border-radius:6px;box-sizing:border-box;box-shadow:1px 2px 6px rgba(0,0,0,0.13);z-index:10"></div>
<div class="a" style="left:561px;top:161px;width:43px;height:70px;background:#c6c6c6;z-index:10"></div>
<svg width="30" height="30" style="left:484px;top:165px;z-index:11">
 <rect x="1.5" y="1.5" width="14.5" height="5.5" fill="none" stroke="#707070" stroke-width="1"/>
 <path d="M8.7 1.5 L8.7 7" stroke="#707070" stroke-width="1"/>
 <rect x="12.5" y="9.5" width="14" height="5.3" fill="#c5d9ef" stroke="#707070" stroke-width="1"/>
 <path d="M19.5 9.5 L19.5 14.8" stroke="#707070" stroke-width="1"/>
 <path d="M3 12.2 L8.5 12.2 M5.3 9.8 L2.8 12.2 L5.3 14.6" fill="none" stroke="#3f7ac0" stroke-width="1.7"/>
 <rect x="1.5" y="17.5" width="14.5" height="10" fill="none" stroke="#707070" stroke-width="1"/>
 <path d="M8.7 17.5 L8.7 27.5 M1.5 22.5 L16 22.5" stroke="#707070" stroke-width="1"/>
</svg>
<svg width="32" height="30" style="left:525px;top:165px;z-index:11">
 <rect x="1.5" y="1.5" width="14.5" height="5.5" fill="none" stroke="#707070" stroke-width="1"/>
 <path d="M8.7 1.5 L8.7 7" stroke="#707070" stroke-width="1"/>
 <rect x="7.5" y="9.5" width="11" height="5.3" fill="#c5d9ef" stroke="#707070" stroke-width="1"/>
 <path d="M12.5 9.5 L12.5 14.8" stroke="#707070" stroke-width="1"/>
 <path d="M18.5 9.5 L21.5 12.2 L18.5 14.8 Z" fill="#c5d9ef"/>
 <path d="M1.5 27.5 L1.5 18.5 L14.5 18.5 M1.5 28.5 L16 28.5 L16 20 M8.7 18.5 L8.7 28.5 M1.5 23.5 L16 23.5" fill="none" stroke="#707070" stroke-width="1"/>
 <path d="M16.5 8.5 C20 11 25 16 29.5 19.5 M29 7 C25 11 20 15 15.5 19.5" fill="none" stroke="#d9502f" stroke-width="2.2" stroke-linecap="round"/>
</svg>
<svg width="30" height="32" style="left:567px;top:164px;z-index:11">
 <path d="M1.5 1.3 L1.5 5.5 M23.5 1.3 L23.5 5.5 M2.3 3.4 L22.7 3.4 M5.3 0.8 L2.6 3.4 L5.3 6 M19.7 0.8 L22.4 3.4 L19.7 6" fill="none" stroke="#3f7ac0" stroke-width="1.2"/>
 <rect x="1.5" y="7.5" width="27" height="20.3" fill="#fff" stroke="#6a6a6a" stroke-width="1.1"/>
 <path d="M8.4 7.5 L8.4 27.8 M16.4 7.5 L16.4 27.8 M23.5 7.5 L23.5 27.8 M1.5 12.3 L28.5 12.3 M1.5 22.8 L28.5 22.8" stroke="#a0a0a0" stroke-width="0.9"/>
 <rect x="8.9" y="12.8" width="7" height="9.5" fill="#3f7ac0"/>
 <path d="M1.5 27.8 L1.5 31 L7.5 31 L10 28.5 M10.5 28 L10.5 31 L17.5 31 L20 28.5" fill="none" stroke="#6a6a6a" stroke-width="1"/>
</svg>
<svg width="8" height="5" style="left:494.5px;top:219.5px;z-index:11"><path d="M1 1.2 L3.7 3.6 L6.4 1.2" fill="none" stroke="#505050" stroke-width="1"/></svg>
<svg width="8" height="5" style="left:536.0px;top:219.5px;z-index:11"><path d="M1 1.2 L3.7 3.6 L6.4 1.2" fill="none" stroke="#505050" stroke-width="1"/></svg>
<svg width="8" height="5" style="left:578.5px;top:219.5px;z-index:11"><path d="M1 1.2 L3.7 3.6 L6.4 1.2" fill="none" stroke="#505050" stroke-width="1"/></svg>
<!-- ===== MENU ===== -->
<div class="a" style="left:528px;top:230px;width:170px;height:240px;background:#fff;border:1px solid #c8c8c8;border-bottom:none;border-radius:5px 0 0 0;box-sizing:border-box;box-shadow:-1px 1px 4px rgba(0,0,0,0.15);z-index:12"></div>
<div class="a" style="left:530px;top:233px;width:167px;height:22px;background:#eaeaea;z-index:12"></div>
<div class="a" style="left:530px;top:380px;width:167px;height:22px;background:#eaeaea;z-index:12"></div>
<div class="a" style="left:530px;top:426px;width:167px;height:23px;background:#eaeaea;z-index:12"></div>
<div class="a" style="left:562px;top:305px;width:135px;height:1px;background:#d6d6d6;z-index:12"></div>
<svg width="18" height="18" style="left:532px;top:260px;z-index:13">
 <path d="M4 2 L4 7 M1.8 4.2 L4 1.8 L6.2 4.2 M4 10 L4 15 M1.8 12.8 L4 15.2 L6.2 12.8" fill="none" stroke="#3f7ac0" stroke-width="1.3"/>
 <path d="M16.5 2.5 L9.5 2.5 L9.5 15.5 L16.5 15.5" fill="none" stroke="#707070" stroke-width="1.1"/>
</svg>
<svg width="18" height="16" style="left:533px;top:310px;z-index:13">
 <path d="M2.5 9 L2.5 2.5 L15.5 2.5 L15.5 9" fill="none" stroke="#707070" stroke-width="1.1"/>
 <path d="M2 13.5 L7 13.5 M4.3 11.3 L2 13.5 L4.3 15.7 M11 13.5 L16 13.5 M13.7 11.3 L16 13.5 L13.7 15.7" fill="none" stroke="#3f7ac0" stroke-width="1.2"/>
</svg>
<svg width="6" height="9" style="left:691px;top:409.5px;z-index:13"><path d="M1 0.5 L5 4 L1 7.5 Z" fill="#505050"/></svg>
<div class="a" style="left:539px;top:458px;width:5px;height:5px;border-radius:50%;background:#f08c1e;z-index:13"></div>
<div class="a" style="left:697px;top:230px;width:5px;height:240px;background:#fff;z-index:13"></div>
<div class="a" style="left:702px;top:235px;width:2px;height:6px;border:1.5px solid #555;border-right:none;box-sizing:border-box;z-index:13"></div>
<!-- ===== ANNOTATION ===== -->
<div class="a" style="left:526px;top:327px;width:174px;height:31.5px;border:4.6px solid #000;box-sizing:border-box;z-index:30"></div>
<svg width="62" height="22" style="left:466px;top:333px;z-index:30">
 <path d="M2.5 5.8 L32 5.8 L32 2 Q33 1.5 35 2.3 L60 11 L35 19.7 Q33 20.5 32 20 L32 16.4 L2.5 16.4 Q1 16.4 1 14.9 L1 7.3 Q1 5.8 2.5 5.8 Z" fill="#000"/>
</svg>

<span class="t" id="tb1" style="left:312.00px;top:15.29px;font-size:13px;line-height:13px;color:#fff;font-weight:400;transform:scaleX(0.8690);z-index:1;">Book1&nbsp; -&nbsp; Excel</span>
<span class="t" id="tb2" style="left:423.00px;top:15.29px;font-size:13px;line-height:13px;color:#fff;font-weight:400;transform:scaleX(0.8508);z-index:1;">NIRMAL</span>
<span class="t" id="tbN" style="left:483.50px;top:15.34px;font-size:12px;line-height:12px;color:#6b6b6b;font-weight:400;transform:scaleX(1.0000);z-index:1;">N</span>
<span class="t" id="tab1" style="left:23.50px;top:46.62px;font-size:12.5px;line-height:12.5px;color:#fff;font-weight:400;transform:scaleX(0.8514);z-index:1;">File</span>
<span class="t" id="tab2" style="left:76.50px;top:46.62px;font-size:12.5px;line-height:12.5px;color:#217346;font-weight:400;transform:scaleX(0.9702);z-index:1;">Home</span>
<span class="t" id="tab3" style="left:136.50px;top:46.62px;font-size:12.5px;line-height:12.5px;color:#fff;font-weight:400;transform:scaleX(0.9043);z-index:1;">Insert</span>
<span class="t" id="tab4" style="left:192.50px;top:46.62px;font-size:12.5px;line-height:12.5px;color:#fff;font-weight:400;transform:scaleX(0.9233);z-index:1;">Formulas</span>
<span class="t" id="tab5" style="left:268.00px;top:46.62px;font-size:12.5px;line-height:12.5px;color:#fff;font-weight:400;transform:scaleX(0.8854);z-index:1;">Data</span>
<span class="t" id="tab6" style="left:319.50px;top:46.62px;font-size:12.5px;line-height:12.5px;color:#fff;font-weight:400;transform:scaleX(0.8764);z-index:1;">Review</span>
<span class="t" id="tab7" style="left:383.00px;top:46.62px;font-size:12.5px;line-height:12.5px;color:#fff;font-weight:400;transform:scaleX(0.9259);z-index:1;">View</span>
<span class="t" id="tab8" style="left:435.00px;top:46.62px;font-size:12.5px;line-height:12.5px;color:#fff;font-weight:400;transform:scaleX(0.9159);z-index:1;">Developer</span>
<span class="t" id="tab9" style="left:542.50px;top:46.62px;font-size:12.5px;line-height:12.5px;color:#fff;font-weight:400;transform:scaleX(0.9797);z-index:1;">Tell me</span>
<span class="t" id="r1" style="left:18.50px;top:111.22px;font-size:12.5px;line-height:12.5px;color:#a6a6a6;font-weight:400;transform:scaleX(0.8404);z-index:1;">Paste</span>
<span class="t" id="r2" style="left:114.00px;top:109.42px;font-size:12.5px;line-height:12.5px;color:#262626;font-weight:400;transform:scaleX(0.9397);z-index:1;">Font</span>
<span class="t" id="r3" style="left:162.00px;top:109.42px;font-size:12.5px;line-height:12.5px;color:#262626;font-weight:400;transform:scaleX(1.0000);z-index:1;">Alignment</span>
<span class="t" id="r4" style="left:236.00px;top:109.42px;font-size:12.5px;line-height:12.5px;color:#262626;font-weight:400;transform:scaleX(0.9686);z-index:1;">Number</span>
<span class="t" id="r5" style="left:484.50px;top:109.22px;font-size:12.5px;line-height:12.5px;color:#262626;font-weight:400;transform:scaleX(0.8896);z-index:1;">Cells</span>
<span class="t" id="r6" style="left:533.00px;top:109.22px;font-size:12.5px;line-height:12.5px;color:#262626;font-weight:400;transform:scaleX(0.9424);z-index:1;">Editing</span>
<span class="t" id="r7" style="left:17.00px;top:146.32px;font-size:12.5px;line-height:12.5px;color:#262626;font-weight:400;transform:scaleX(0.9253);z-index:1;">Clipboard</span>
<span class="t" id="r8" style="left:365.00px;top:146.22px;font-size:12.5px;line-height:12.5px;color:#262626;font-weight:400;transform:scaleX(0.8181);z-index:1;">Styles</span>
<span class="t" id="r9" style="left:320.50px;top:77.42px;font-size:12.5px;line-height:12.5px;color:#262626;font-weight:400;transform:scaleX(0.9777);z-index:1;">Conditional Formatting</span>
<span class="t" id="r10" style="left:320.50px;top:100.22px;font-size:12.5px;line-height:12.5px;color:#262626;font-weight:400;transform:scaleX(0.9124);z-index:1;">Format as Table</span>
<span class="t" id="r11" style="left:320.50px;top:123.22px;font-size:12.5px;line-height:12.5px;color:#262626;font-weight:400;transform:scaleX(0.8916);z-index:1;">Cell Styles</span>
<span class="t" id="f1" style="left:15.00px;top:177.99px;font-size:13px;line-height:13px;color:#262626;font-weight:400;transform:scaleX(1.0000);z-index:1;">A1</span>
<span class="t" id="f2" style="left:299.50px;top:177.87px;font-size:13.5px;line-height:13.5px;color:#3a3a3a;font-weight:400;transform:scaleX(1.0352);z-index:1;">How to display all contents</span>
<span class="t" id="c1" style="left:57.00px;top:230.74px;font-size:12px;line-height:12px;color:#217346;font-weight:400;transform:scaleX(1.0000);z-index:1;">A</span>
<span class="t" id="c2" style="left:120.10px;top:230.74px;font-size:12px;line-height:12px;color:#262626;font-weight:400;transform:scaleX(1.0000);z-index:1;">B</span>
<span class="t" id="c3" style="left:184.50px;top:230.74px;font-size:12px;line-height:12px;color:#262626;font-weight:400;transform:scaleX(1.0000);z-index:1;">C</span>
<span class="t" id="c4" style="left:247.50px;top:230.74px;font-size:12px;line-height:12px;color:#262626;font-weight:400;transform:scaleX(1.0000);z-index:1;">D</span>
<span class="t" id="c5" style="left:312.10px;top:230.74px;font-size:12px;line-height:12px;color:#262626;font-weight:400;transform:scaleX(1.0000);z-index:1;">E</span>
<span class="t" id="c6" style="left:376.50px;top:230.74px;font-size:12px;line-height:12px;color:#262626;font-weight:400;transform:scaleX(1.0000);z-index:1;">F</span>
<span class="t" id="c7" style="left:439.50px;top:230.74px;font-size:12px;line-height:12px;color:#262626;font-weight:400;transform:scaleX(1.0000);z-index:1;">G</span>
<span class="t" id="d1" style="left:31.00px;top:250.99px;font-size:13px;line-height:13px;color:#000;font-weight:400;transform:scaleX(1.0651);z-index:1;">How to display all contents of a cell in excel</span>
<span class="t" id="d2" style="left:31.00px;top:270.99px;font-size:13px;line-height:13px;color:#000;font-weight:400;transform:scaleX(1.0903);z-index:1;">Display all contentes with wrap function</span>
<span class="t" id="d3" style="left:31.00px;top:290.99px;font-size:13px;line-height:13px;color:#000;font-weight:400;transform:scaleX(1.0739);z-index:1;">Select the cells then you want to display</span>
<span class="t" id="d4" style="left:31.00px;top:310.99px;font-size:13px;line-height:13px;color:#000;font-weight:400;transform:scaleX(1.0561);z-index:1;">Then select cells to expand</span>
<span class="t" id="p1" style="left:483.00px;top:201.42px;font-size:12.5px;line-height:12.5px;color:#262626;font-weight:400;transform:scaleX(0.8912);z-index:20;">Insert</span>
<span class="t" id="p2" style="left:524.00px;top:201.42px;font-size:12.5px;line-height:12.5px;color:#262626;font-weight:400;transform:scaleX(0.9059);z-index:20;">Delete</span>
<span class="t" id="p3" style="left:563.00px;top:201.42px;font-size:12.5px;line-height:12.5px;color:#262626;font-weight:400;transform:scaleX(0.9340);z-index:20;">Format</span>
<span class="t" id="m1" style="left:537.50px;top:238.22px;font-size:12.5px;line-height:12.5px;color:#595959;font-weight:700;transform:scaleX(0.9020);z-index:20;">Cell Size</span>
<span class="t" id="m2" style="left:562.00px;top:263.12px;font-size:12.5px;line-height:12.5px;color:#404040;font-weight:400;transform:scaleX(0.9407);z-index:20;">Row <u>H</u>eight...</span>
<span class="t" id="m3" style="left:562.00px;top:286.92px;font-size:12.5px;line-height:12.5px;color:#404040;font-weight:400;transform:scaleX(0.9649);z-index:20;"><u>A</u>utoFit Row Height</span>
<span class="t" id="m4" style="left:562.00px;top:313.42px;font-size:12.5px;line-height:12.5px;color:#404040;font-weight:400;transform:scaleX(0.9796);z-index:20;">Column <u>W</u>idth...</span>
<span class="t" id="m5" style="left:562.00px;top:337.42px;font-size:12.5px;line-height:12.5px;color:#404040;font-weight:400;transform:scaleX(0.9853);z-index:20;">AutoF<u>i</u>t Column Width</span>
<span class="t" id="m6" style="left:562.00px;top:361.22px;font-size:12.5px;line-height:12.5px;color:#404040;font-weight:400;transform:scaleX(0.9553);z-index:20;"><u>D</u>efault Width...</span>
<span class="t" id="m7" style="left:539.00px;top:385.72px;font-size:12.5px;line-height:12.5px;color:#595959;font-weight:700;transform:scaleX(0.8887);z-index:20;">Visibility</span>
<span class="t" id="m8" style="left:562.00px;top:408.02px;font-size:12.5px;line-height:12.5px;color:#404040;font-weight:400;transform:scaleX(0.9852);z-index:20;">Hide &amp; <u>U</u>nhide</span>
<span class="t" id="m9" style="left:539.00px;top:432.22px;font-size:12.5px;line-height:12.5px;color:#595959;font-weight:700;transform:scaleX(0.9197);z-index:20;">Organize Sheets</span>
<span class="t" id="m10" style="left:562.00px;top:455.22px;font-size:12.5px;line-height:12.5px;color:#404040;font-weight:400;transform:scaleX(0.8953);z-index:20;">Rename Sheet</span>
<span class="t" id="s1" style="left:116.00px;top:422.22px;font-size:12.5px;line-height:12.5px;color:#444;font-weight:400;transform:scaleX(0.9744);z-index:4;">Sheet1</span>
<span class="t" id="s2" style="left:180.50px;top:421.72px;font-size:12.5px;line-height:12.5px;color:#217346;font-weight:700;transform:scaleX(0.9756);z-index:4;">Sheet2</span>
<span class="t" id="st1" style="left:11.00px;top:447.94px;font-size:12px;line-height:12px;color:#262626;font-weight:400;transform:scaleX(0.8656);z-index:4;">Ready</span>
<span class="t" id="st2" style="left:112.00px;top:448.14px;font-size:12px;line-height:12px;color:#262626;font-weight:400;transform:scaleX(0.9344);z-index:4;">Accessibility: Investigate</span>
<span class="t" id="st3" style="left:322.50px;top:447.94px;font-size:12px;line-height:12px;color:#262626;font-weight:400;transform:scaleX(0.9602);z-index:4;">Count: 4</span>
<span class="t" id="rn1" style="left:12.10px;top:251.84px;font-size:12px;line-height:12px;color:#217346;font-weight:400;transform:scaleX(1.0000);z-index:1;">1</span>
<span class="t" id="rn2" style="left:12.10px;top:271.84px;font-size:12px;line-height:12px;color:#217346;font-weight:400;transform:scaleX(1.0000);z-index:1;">2</span>
<span class="t" id="rn3" style="left:12.10px;top:291.84px;font-size:12px;line-height:12px;color:#217346;font-weight:400;transform:scaleX(1.0000);z-index:1;">3</span>
<span class="t" id="rn4" style="left:12.10px;top:311.84px;font-size:12px;line-height:12px;color:#217346;font-weight:400;transform:scaleX(1.0000);z-index:1;">4</span>
<span class="t" id="rn5" style="left:11.60px;top:331.84px;font-size:12px;line-height:12px;color:#262626;font-weight:400;transform:scaleX(1.0000);z-index:1;">5</span>
<span class="t" id="rn6" style="left:11.60px;top:351.84px;font-size:12px;line-height:12px;color:#262626;font-weight:400;transform:scaleX(1.0000);z-index:1;">6</span>
<span class="t" id="rn7" style="left:12.10px;top:371.84px;font-size:12px;line-height:12px;color:#262626;font-weight:400;transform:scaleX(1.0000);z-index:1;">7</span>
<span class="t" id="rn8" style="left:12.10px;top:391.84px;font-size:12px;line-height:12px;color:#262626;font-weight:400;transform:scaleX(1.0000);z-index:1;">8</span>
<span class="t" id="rn9" style="left:11.60px;top:411.84px;font-size:12px;line-height:12px;color:#262626;font-weight:400;transform:scaleX(1.0000);z-index:1;">9</span>
</body></html>
